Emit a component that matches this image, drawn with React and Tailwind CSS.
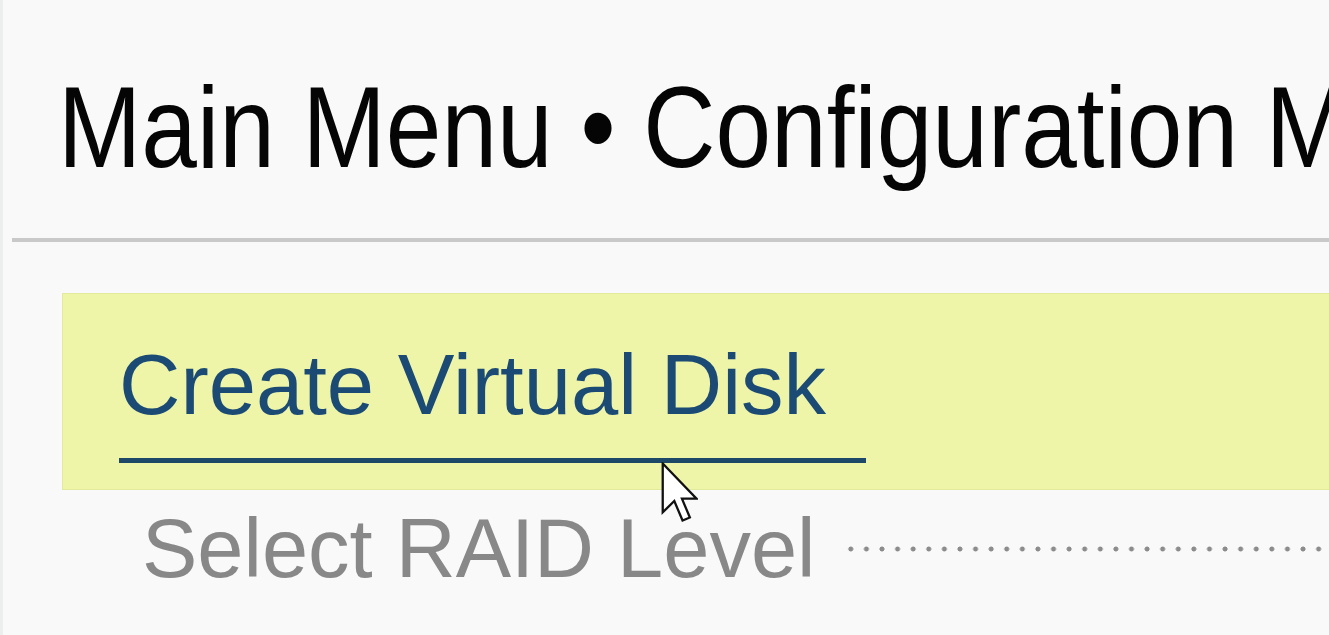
import React from 'react'

// Classic arrow pointer, drawn over the menu
function Pointer() {
  return (
    <svg width="37" height="61" viewBox="0 0 12 20" className="absolute left-[658px] top-[462px]">
      <path
        d="M0.5 0.5 L0.5 16.5 L4.3 12.8 L7 19.2 L9.4 18.2 L6.8 12 L11.6 12 Z"
        fill="#ffffff"
        stroke="#111111"
        strokeWidth="0.75"
        strokeLinejoin="miter"
      />
    </svg>
  )
}

export default function App() {
  return (
    <div className="relative min-h-screen w-full overflow-hidden bg-[#f8f9f8] border-l-[3px] border-[#eceeed] font-['Liberation_Sans',Arial,sans-serif]">
      {/* Breadcrumb header */}
      <h1 className="pt-[84px] pl-[55px] text-[100px] leading-none font-normal text-[#050505] whitespace-nowrap">
        <span className="inline-block origin-bottom scale-y-115">Main Menu • Configuration Management</span>
      </h1>
      <div className="mt-[54px] ml-[9px] h-[4px] bg-[#c8c9c8]" />

      {/* Selected action */}
      <div className="mt-[51px] ml-[59px] h-[197px] bg-[#eef5a9] border border-[#e2eb9c] border-r-0 pl-[56px] pt-[48px]">
        <span className="inline-block pb-[31px] pr-[40px] border-b-[5px] border-[#1e4867] text-[85px] leading-none text-[#1b4b74] whitespace-nowrap">
          Create Virtual Disk
        </span>
      </div>

      {/* Next option row */}
      <div className="mt-[17px] flex items-center pl-[139px]">
        <span className="text-[83px] leading-none text-[#888888] whitespace-nowrap">Select RAID Level</span>
        <div className="ml-[27px] h-[6px] flex-1 bg-[radial-gradient(circle,#8c8c8c_2.2px,transparent_2.8px)] bg-[length:15.6px_6px] bg-repeat-x" />
      </div>

      <Pointer />
    </div>
  )
}
